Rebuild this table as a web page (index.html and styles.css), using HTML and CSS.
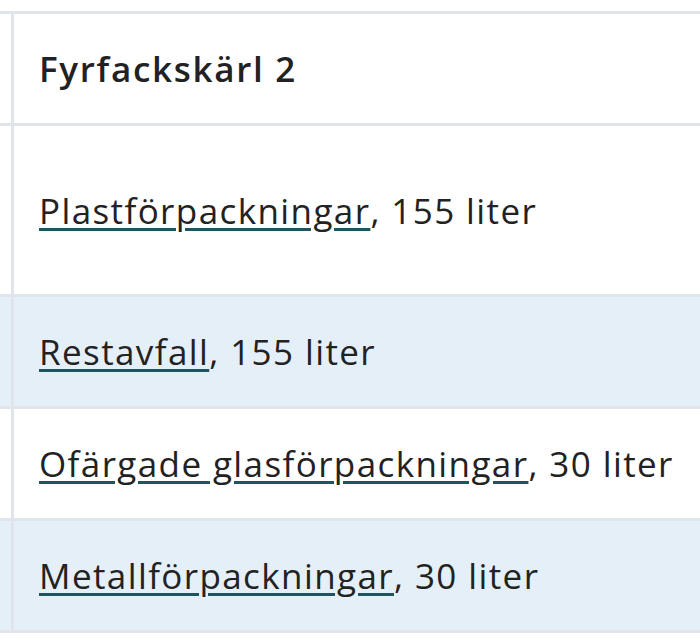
FILE: index.html
```html
<!DOCTYPE html>
<html lang="sv">
<head>
<meta charset="utf-8">
<title>Fyrfackskärl 2</title>
<link rel="stylesheet" href="styles.css">
</head>
<body>
<div class="viewport">
  <table class="bins">
    <thead>
      <tr class="row-head">
        <th class="lead"></th>
        <th class="cell">Fyrfackskärl 2</th>
      </tr>
    </thead>
    <tbody>
      <tr class="row-tall">
        <td class="lead"></td>
        <td class="cell"><a href="#">Plastförpackningar</a>, 155 liter</td>
      </tr>
      <tr class="row shaded">
        <td class="lead"></td>
        <td class="cell"><a href="#">Restavfall</a>, 155 liter</td>
      </tr>
      <tr class="row">
        <td class="lead"></td>
        <td class="cell"><a href="#">Ofärgade glasförpackningar</a>, 30 liter</td>
      </tr>
      <tr class="row shaded">
        <td class="lead"></td>
        <td class="cell"><a href="#">Metallförpackningar</a>, 30 liter</td>
      </tr>
    </tbody>
  </table>
</div>
</body>
</html>
```

FILE: styles.css
```css
html, body {
  margin: 0;
  padding: 0;
  background: #ffffff;
}

.viewport {
  width: 700px;
  overflow: hidden;
  padding-top: 11px;
}

.bins {
  border-collapse: collapse;
  width: 740px;
  font-family: "Open Sans", "Noto Sans", sans-serif;
  font-size: 35px;
  letter-spacing: 1.4px;
  color: #222222;
}

.bins th,
.bins td {
  border: 3px solid #dfe5eb;
  padding: 0;
  vertical-align: middle;
  text-align: left;
}

.bins .lead {
  width: 11px;
  border-left: none;
}

.bins .cell {
  padding-left: 25px;
  white-space: nowrap;
}

.bins th.cell {
  font-weight: 600;
  font-size: 35px;
  letter-spacing: 1.7px;
}

.row-head { height: 112px; }
.row-tall { height: 171px; }
.row { height: 112px; }

.shaded td {
  background: #e5eff7;
}

.bins a {
  color: #222222;
  text-decoration: underline;
  text-decoration-color: #1f5560;
  text-decoration-thickness: 3px;
  text-underline-offset: 4px;
}
```
